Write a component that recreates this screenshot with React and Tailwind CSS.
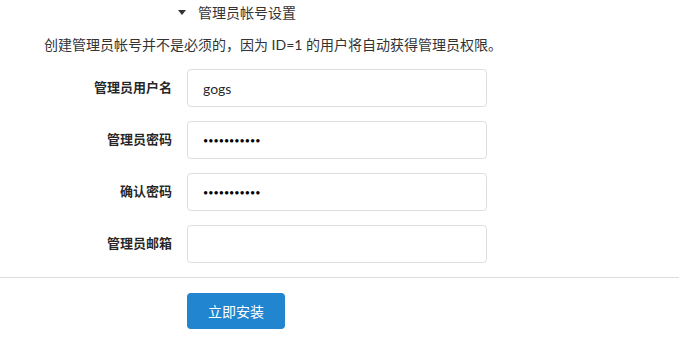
import React from 'react';

const fields = [
  { label: '管理员用户名', type: 'text', value: 'gogs' },
  { label: '管理员密码', type: 'password', value: '12345678901' },
  { label: '确认密码', type: 'password', value: '12345678901' },
  { label: '管理员邮箱', type: 'text', value: '' },
];

const App = () => {
  return (
    <div className="w-[679px] h-[338px] bg-white overflow-hidden text-[14px] text-[rgba(0,0,0,0.87)] font-['Lato','Noto_Sans_CJK_SC',sans-serif]">
      {/* section header */}
      <div className="flex items-center h-[25px] pl-[178px]">
        <span className="w-0 h-0 border-l-[4px] border-r-[4px] border-t-[5px] border-l-transparent border-r-transparent border-t-[#333]" />
        <span className="ml-[12px] leading-[25px] text-[#333]">管理员帐号设置</span>
      </div>

      <p className="pl-[44px] mt-[8px] leading-[24px] text-[#333]">
        创建管理员帐号并不是必须的，因为 ID=1 的用户将自动获得管理员权限。
      </p>

      <div className="mt-[12px] flex flex-col gap-[14px]">
        {fields.map((f) => (
          <div key={f.label} className="flex items-center">
            <label className="w-[172px] text-right text-[13px] font-bold">{f.label}</label>
            <input
              type={f.type}
              defaultValue={f.value}
              readOnly
              className={`ml-[15px] w-[300px] h-[38px] px-[15px] border border-[#dedede] rounded-[4px] text-[rgba(0,0,0,0.87)] outline-none ${f.type === 'password' ? 'text-[9px] text-black' : 'text-[14px]'}`}
            />
          </div>
        ))}
      </div>

      <div className="mt-[14px] border-t border-[#dcdcdc]" />

      <div className="pl-[187px] mt-[15px]">
        <button className="w-[98px] h-[36px] rounded-[4px] bg-[#2185d0] text-white text-[14px]">
          立即安装
        </button>
      </div>
    </div>
  );
};

export default App;
